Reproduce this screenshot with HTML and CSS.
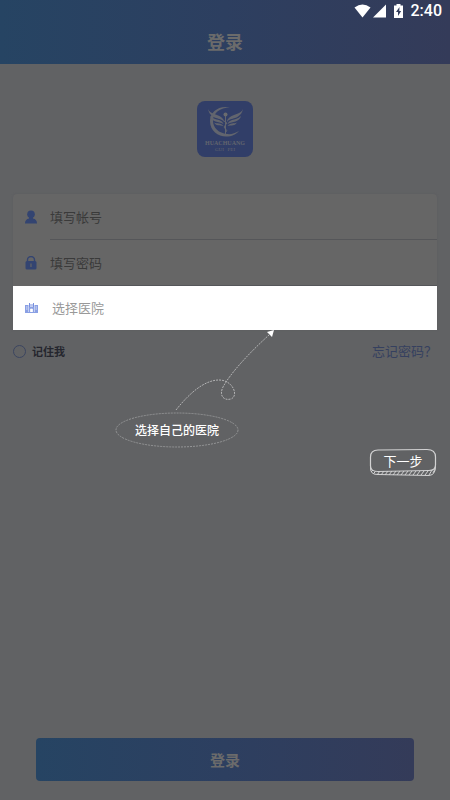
FILE: index.html
```html
<!DOCTYPE html>
<html lang="zh-CN">
<head>
<meta charset="utf-8">
<meta name="viewport" content="width=device-width, initial-scale=1">
<title>登录</title>
<link rel="stylesheet" href="styles.css">
</head>
<body>
<header class="header">
  <div class="status">
    <svg width="17" height="14" viewBox="0 0 17 14" aria-hidden="true"><path d="M.5 3.500Q8.500-2.500 16.500 3.500L8.500 13.500Z" fill="#fff"/></svg>
    <svg width="13" height="14" viewBox="0 0 13 14" aria-hidden="true"><path d="M13 .5V13.500H0Z" fill="#fff"/></svg>
    <svg class="battery" width="9" height="14" viewBox="0 0 9 14" aria-hidden="true"><path d="M2.500 0h4v1.500H9V14H0V1.500h2.500Z" fill="#fff"/><path d="M5.500 3 2 8h2v4l3.200-5H5.300Z" fill="#333d5c"/></svg>
    <span>2:40</span>
  </div>
  <h1 class="title">登录</h1>
</header>
<main class="main">
  <svg class="logo" width="56" height="56" viewBox="0 0 56 56" role="img" aria-label="HUACHUANG GUI PEI">
    <rect width="56" height="56" rx="8" fill="#313e68"/>
    <path d="M33 6.500C22 4 13 11 13 20c0 10 8 15.500 16 15.500 6 0 10-2 13-5.500-4 2.500-8 3.500-12 3-8-.8-14-6-14-13C16 12 23 6.500 33 6.500Z" fill="#62656e"/>
    <g fill="#62656e">
      <path d="M11 8c2 5 9 5 13 8 2 1.500 3 3 3 5-2-3-5-3-8-4-4-1.500-7-4-8-9Z"/>
      <path d="M13 15c3 3 6 3 9 4 2 .8 4 2 4.500 4-3-2-5-1.500-8-2.500-3-1-5-3-5.500-5.500Z"/>
      <path d="M17 21.500c3 1.500 7 0 9.500 3.500-4-1-7.500 0-9.500-3.500Z"/>
      <path d="M46 8c-2 5-9 5-13 8-2 1.500-3 3-3 5 2-3 5-3 8-4 4-1.500 7-4 8-9Z"/>
      <path d="M44 15c-3 3-6 3-9 4-2 .8-4 2-4.500 4 3-2 5-1.500 8-2.500 3-1 5-3 5.500-5.500Z"/>
      <path d="M40 21.500c-3 1.500-7 0-9.500 3.500 4-1 7.500 0 9.500-3.500Z"/>
    </g>
    <path d="M28.500 15v18M27 20q4.500 2 1.500 4t0 4 0 3" fill="none" stroke="#62656e"/>
    <circle cx="28.500" cy="13.500" r="2" fill="#6a6b6e"/>
    <text class="logo-name" x="28" y="44" text-anchor="middle">HUACHUANG</text>
    <text class="logo-sub" x="28" y="50" text-anchor="middle">GUI&#160;&#160; PEI</text>
  </svg>
  <form class="form">
    <div class="card">
      <div class="row">
        <label class="icon" for="account" aria-label="帐号"><svg width="12" height="14" viewBox="0 0 12 14"><circle cx="6" cy="4.200" r="3.800" fill="#334471"/><path d="M4 6h4v2.500q4 .8 4 5H0q0-4.200 4-5Z" fill="#334471"/></svg></label>
        <input class="field" id="account" type="text" placeholder="填写帐号">
      </div>
      <div class="row">
        <label class="icon" for="password" aria-label="密码"><svg width="12" height="14" viewBox="0 0 12 14"><path d="M2.500 6V4a3.500 3.500 0 0 1 7 0v2" fill="none" stroke="#334471" stroke-width="1.400"/><rect x=".5" y="5" width="11" height="8.500" rx="1.500" fill="#334471"/><path d="M6 7.500v3.500" stroke="#666" stroke-width="1.200"/></svg></label>
        <input class="field" id="password" type="password" placeholder="填写密码">
      </div>
      <div class="row row-active">
        <label class="icon" for="hospital" aria-label="医院"><svg width="13" height="10" viewBox="0 0 13 10"><path d="M0 2h3.500v7H0ZM9.500 2H13v7H9.500ZM4 3.500h5V9H4Z" fill="#8aa0e4"/><path d="M4.500 0v4M8.500 0v4M4.500 2h4" stroke="#7890e0"/><path d="M5.500 9V6h2v3M1 4h1.500M1 6h1.500M10.500 4H12M10.500 6H12" stroke="#fff" fill="#fff" stroke-width=".7"/><path d="M0 9.500h13" stroke="#8aa0e4"/></svg></label>
        <select class="field field-select" id="hospital"><option>选择医院</option></select>
        <div class="guide">
          <svg class="arrow" width="100" height="82" viewBox="0 0 100 82" aria-hidden="true">
            <path d="M1 80C16 61 31 50 44 50c14 0 20 16 12 19-8 2-12-4-8-12C55 44 73 24 94 5" fill="none" stroke="#b4b4b5" stroke-dasharray="2 1"/>
            <path d="M99 0 97 7 92 2Z" fill="#fff"/>
          </svg>
          <div class="bubble">
            <svg class="oval" viewBox="0 0 124 36" aria-hidden="true"><ellipse cx="62" cy="18" rx="61" ry="17" fill="none" stroke="#949596" stroke-dasharray="2 1"/></svg>
            <span>选择自己的医院</span>
          </div>
        </div>
      </div>
    </div>
    <div class="options">
      <label class="remember"><input class="radio" type="radio" name="remember">记住我</label>
      <a class="forgot" href="#forgot">忘记密码？</a>
    </div>
    <button class="next" type="button">
      <svg class="sketch" viewBox="0 0 68 29" aria-hidden="true">
        <path d="M1.500 18V9Q1.500 2 9 2L58 1.500Q66.500 1.500 66.500 9V17Q66.500 22.500 60 22.500L9 23.500Q1.500 23.500 1.500 18Z" fill="none" stroke="#d2d2d3" stroke-width="1.200"/>
        <path d="M1.500 18Q.5 27 9 26.500L60 27.500Q67 27 66.500 17" fill="none" stroke="#d2d2d3"/>
        <path d="M2 24l2-2M4.500 26l2-3M8 27l3-4M12 27l3-4M16 27l3-4M20 27l3-4M24 27l3-4M28 27l3-4M32 27l3-4M36 27l3-4M40 27l3-4M44 27l3-4M48 27l3-4M52 27l3-4M56 27l3-4M60 27l3-5M64 25l2-4" stroke="#d2d2d3"/>
      </svg>
      <span>下一步</span>
    </button>
    <button class="submit" type="submit">登录</button>
  </form>
</main>
</body>
</html>
```

FILE: styles.css
```css
* {
  box-sizing: border-box;
}

body {
  margin: 0;
  min-height: 100vh;
  display: flex;
  flex-direction: column;
  background: #616264;
  font-family: "Noto Sans CJK SC", sans-serif;
  font-size: 13px;
  line-height: 20px;
}

.header {
  height: 64px;
  background: linear-gradient(90deg, #264463, #2d3f60 50%, #343b59);
}

.status {
  display: flex;
  justify-content: flex-end;
  align-items: center;
  gap: 2px;
  height: 22px;
  padding-right: 8px;
  color: #fff;
  font: 500 16px/24px Roboto, sans-serif;
}

.battery {
  margin: 0 6px;
}

.title {
  margin: 5px 0 0;
  color: #6b6b6b;
  font-size: 18px;
  font-weight: 700;
  line-height: 28px;
  text-align: center;
}

.main,
.form {
  flex: 1;
  display: flex;
  flex-direction: column;
}

.main {
  padding: 37px 13px 19px;
}

.logo {
  align-self: center;
  margin-bottom: 37px;
}

.logo-name,
.logo-sub {
  fill: #62656e;
  font-family: "Liberation Serif", serif;
  font-size: 6px;
}

.logo-name {
  font-weight: 700;
}

.logo-sub {
  font-size: 5px;
}

.card {
  border-radius: 4px 4px 0 0;
  background: #666;
  box-shadow: 0 0 2px #5b5c60;
}

.row {
  position: relative;
  display: flex;
  align-items: center;
  height: 46px;
  padding-left: 12px;
}

.row-active {
  height: 44px;
  background: #fff;
}

.icon {
  display: flex;
  width: 25px;
}

.field {
  flex: 1;
  min-width: 0;
  height: 100%;
  padding: 0;
  border: 0;
  border-bottom: 1px solid #555659;
  outline: 0;
  background: transparent;
  color: #3a3a3a;
  font: inherit;
}

.field::placeholder {
  color: #3a3a3a;
  opacity: 1;
}

.field-select {
  appearance: none;
  padding-left: 2px;
  border: 0;
  color: #999;
}

.options {
  display: flex;
  align-items: center;
  justify-content: space-between;
  height: 42px;
}

.remember {
  display: flex;
  align-items: center;
  gap: 6px;
  color: #25262e;
  font-size: 11px;
  font-weight: 700;
}

.radio {
  appearance: none;
  width: 13px;
  height: 13px;
  margin: 0;
  border: 1px solid #3b4560;
  border-radius: 50%;
}

.forgot {
  color: #35405f;
  text-decoration: none;
}

.guide {
  position: absolute;
  top: 100%;
  left: 102px;
  color: #fff;
}

.arrow {
  display: block;
  margin-left: 60px;
}

.bubble,
.next {
  position: relative;
  display: flex;
  align-items: center;
  justify-content: center;
}

.bubble {
  width: 124px;
  height: 36px;
  font-size: 12px;
  font-weight: 500;
}

.oval,
.sketch {
  position: absolute;
  inset: 0;
  width: 100%;
  height: 100%;
}

.next {
  align-self: flex-end;
  width: 68px;
  height: 29px;
  margin-top: 76px;
  padding: 0 0 3px;
  border: 0;
  background: none;
  color: #fff;
  font: inherit;
}

.submit {
  height: 43px;
  margin: auto 23px 0;
  border: 0;
  border-radius: 4px;
  background: linear-gradient(90deg, #264463, #2d3f60 50%, #343b59);
  color: #6b6b6b;
  font: inherit;
  font-size: 15px;
  font-weight: 700;
}
```
